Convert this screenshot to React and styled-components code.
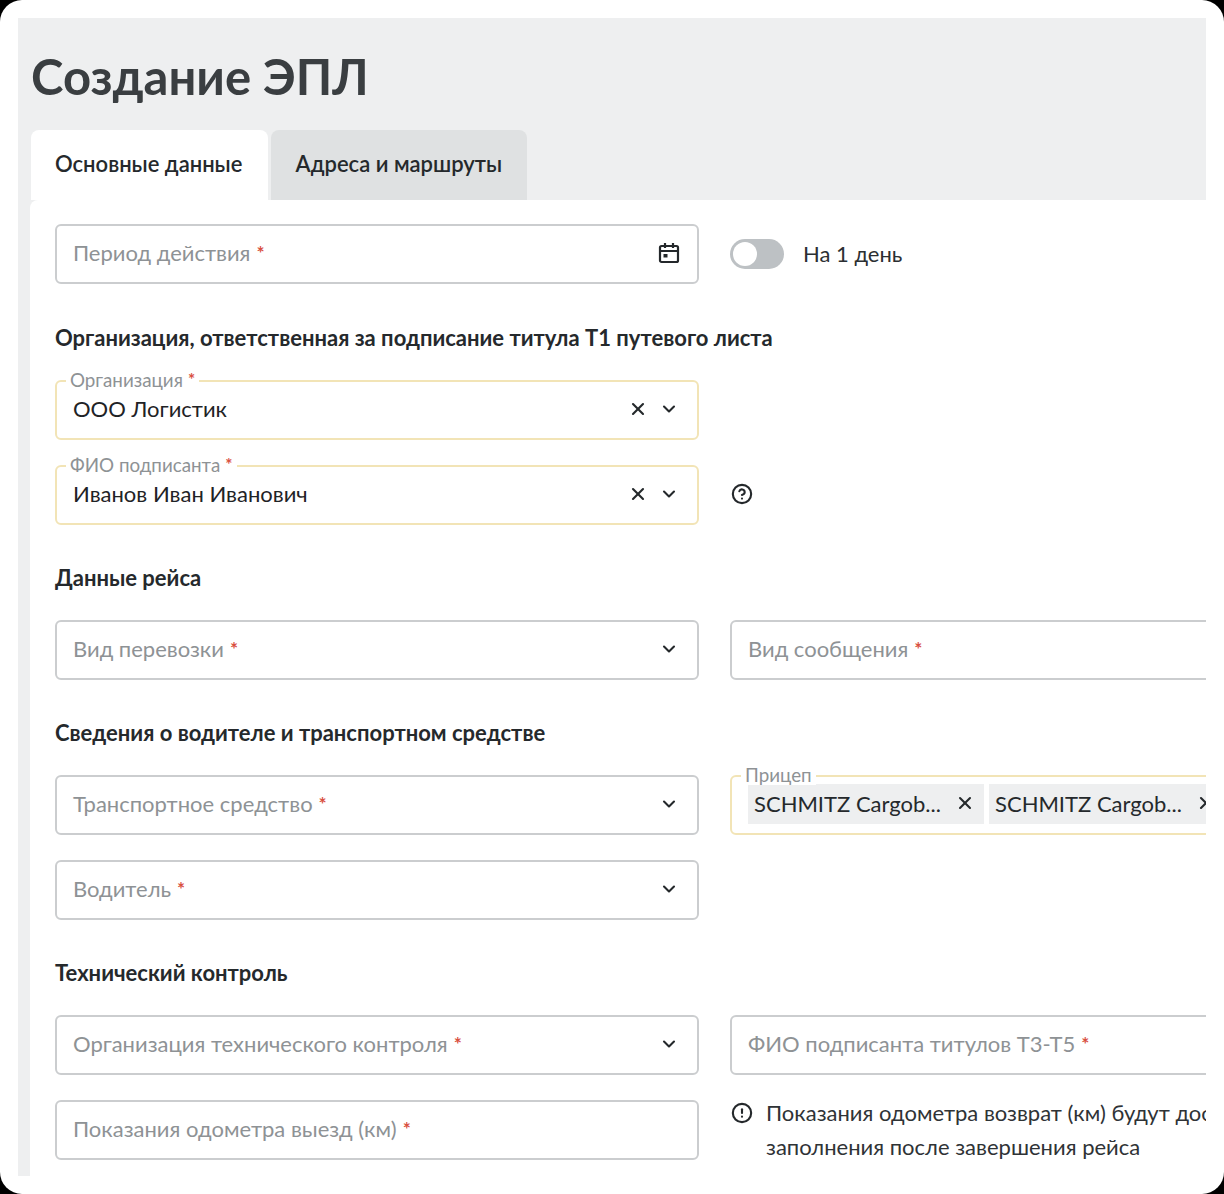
import React from 'react'
import styled, { createGlobalStyle } from 'styled-components'
import { X, ChevronDown, CircleHelp, CircleAlert } from 'lucide-react'

const GlobalStyle = createGlobalStyle`
  html, body {
    margin: 0;
    padding: 0;
    background: #000;
  }
  body {
    font-family: Lato, "Open Sans", "Noto Sans", sans-serif;
    color: #1f2326;
  }
`

const Frame = styled.div`
  width: 1224px;
  height: 1194px;
  box-sizing: border-box;
  padding: 18px;
  background: #fff;
  border-radius: 22px;
`

const Screen = styled.div`
  height: 1158px;
  padding-left: 12px;
  background: #eeeff0;
  overflow: hidden;
`

const Title = styled.h1`
  margin: 0;
  padding: 28px 0 0 1px;
  height: 84px;
  font-size: 49px;
  line-height: 60px;
  font-weight: 700;
  color: #3a3e41;
`

const Tabs = styled.div`
  display: flex;
  gap: 3px;
  padding-left: 1px;
`

const Tab = styled.div`
  box-sizing: border-box;
  height: 70px;
  padding: 0 ${(p) => (p.$active ? 26 : 25)}px 4px 24px;
  display: flex;
  align-items: center;
  border-radius: 8px 8px 0 0;
  font-size: 22px;
  font-weight: 600;
  color: #25292c;
  background: ${(p) => (p.$active ? '#fff' : '#dfe1e2')};
`

const Card = styled.div`
  height: 976px;
  padding: 24px 0 0 25px;
  background: #fff;
  border-radius: 8px 0 0 0;
`

const Section = styled.section`
  margin-top: ${(p) => p.$top ?? 41}px;
`

const SectionTitle = styled.h2`
  margin: 0 0 30px;
  font-size: 22px;
  line-height: 24px;
  font-weight: 700;
  color: #25292c;
`

const Grid = styled.div`
  display: grid;
  grid-template-columns: 644px 644px;
  column-gap: 31px;
  row-gap: 25px;
`

const Field = styled.div`
  position: relative;
  box-sizing: border-box;
  height: 60px;
  padding: 0 18px 3px 16px;
  display: flex;
  align-items: center;
  background: #fff;
  border: 2px solid ${(p) => (p.$filled ? '#f2e4b6' : '#cbcdcf')};
  border-radius: 6px;
  font-size: 22px;
`

const FieldText = styled.span`
  flex: 1;
  white-space: nowrap;
  color: #1f2326;
`

const Placeholder = styled.span`
  flex: 1;
  white-space: nowrap;
  color: #8e9295;
`

const Star = styled.span`
  position: relative;
  top: -1px;
  margin-left: 6px;
  font-size: 19px;
  font-weight: 700;
  color: #d9503f;
`

const FloatLabel = styled.label`
  position: absolute;
  top: -12px;
  left: 9px;
  padding: 0 4px;
  background: #fff;
  font-size: 18.8px;
  line-height: 20px;
  color: #8e9295;
`

const LabelStar = styled.span`
  position: relative;
  top: -1px;
  margin-left: 5px;
  font-size: 17px;
  font-weight: 700;
  color: #d9503f;
`

const Actions = styled.div`
  display: flex;
  align-items: center;
  gap: 11px;
  margin-top: 1px;
  color: #24282b;
`

const Aside = styled.div`
  display: flex;
  align-items: center;
  padding-bottom: 2px;
  font-size: 22px;
  color: #2b2f32;
`

const SwitchTrack = styled.div`
  box-sizing: border-box;
  width: 54px;
  height: 30px;
  margin: 2px 19px 0 0;
  padding: 3px;
  border-radius: 15px;
  background: #bdc1c4;
`

const SwitchKnob = styled.div`
  width: 24px;
  height: 24px;
  border-radius: 50%;
  background: #fff;
`

const HelpIcon = styled(CircleHelp)`
  margin-left: 1px;
  color: #24282b;
`

const Chips = styled.div`
  display: flex;
  gap: 5px;
  margin-top: 1px;
  overflow: hidden;
`

const Chip = styled.div`
  flex: none;
  box-sizing: border-box;
  width: 236px;
  height: 40px;
  padding: 0 9px 2px 6px;
  display: flex;
  align-items: center;
  justify-content: space-between;
  background: #eeeff0;
  color: #25292c;
`

const Note = styled.div`
  display: flex;
  gap: 13px;
  margin-top: -4px;
  font-size: 22px;
  line-height: 34px;
  color: #2f3336;
  white-space: nowrap;
`

const NoteIcon = styled(CircleAlert)`
  flex: none;
  margin: 6px 0 0 1px;
  color: #24282b;
`

const CalendarSvg = styled.svg`
  margin-right: -1px;
`

const CalendarIcon = () => (
  <CalendarSvg width="22" height="22" viewBox="0 0 22 22" fill="none" stroke="#24282b" strokeWidth="2.2">
    <rect x="2" y="4" width="18" height="16" rx="1.5" />
    <path d="M2 9h18M7 1v5M15 1v5" />
    <rect x="5.5" y="12" width="4" height="3.5" fill="#24282b" stroke="none" />
  </CalendarSvg>
)

const Chevron = () => <ChevronDown size={20} strokeWidth={2.5} />

const ClearIcon = () => <X size={20} strokeWidth={2.5} />

const Required = () => <Star>*</Star>

const PlainField = ({ label, select }) => (
  <Field>
    <Placeholder>
      {label}
      <Required />
    </Placeholder>
    {select && (
      <Actions>
        <Chevron />
      </Actions>
    )}
  </Field>
)

const FilledField = ({ label, value }) => (
  <Field $filled>
    <FloatLabel>
      {label}
      <LabelStar>*</LabelStar>
    </FloatLabel>
    <FieldText>{value}</FieldText>
    <Actions>
      <ClearIcon />
      <Chevron />
    </Actions>
  </Field>
)

const App = () => {
  return (
    <>
      <GlobalStyle />
      <Frame>
        <Screen>
          <Title>Создание ЭПЛ</Title>
          <Tabs>
            <Tab $active>Основные данные</Tab>
            <Tab>Адреса и маршруты</Tab>
          </Tabs>
          <Card>
            <Grid>
              <Field>
                <Placeholder>
                  Период действия
                  <Required />
                </Placeholder>
                <Actions>
                  <CalendarIcon />
                </Actions>
              </Field>
              <Aside>
                <SwitchTrack>
                  <SwitchKnob />
                </SwitchTrack>
                На 1 день
              </Aside>
            </Grid>

            <Section $top={42}>
              <SectionTitle>Организация, ответственная за подписание титула Т1 путевого листа</SectionTitle>
              <Grid>
                <FilledField label="Организация" value="ООО Логистик" />
                <div />
                <FilledField label="ФИО подписанта" value="Иванов Иван Иванович" />
                <Aside>
                  <HelpIcon size={22} strokeWidth={2.3} />
                </Aside>
              </Grid>
            </Section>

            <Section>
              <SectionTitle>Данные рейса</SectionTitle>
              <Grid>
                <PlainField label="Вид перевозки" select />
                <PlainField label="Вид сообщения" />
              </Grid>
            </Section>

            <Section>
              <SectionTitle>Сведения о водителе и транспортном средстве</SectionTitle>
              <Grid>
                <PlainField label="Транспортное средство" select />
                <Field $filled>
                  <FloatLabel>Прицеп</FloatLabel>
                  <Chips>
                    <Chip>
                      SCHMITZ Cargob...
                      <ClearIcon />
                    </Chip>
                    <Chip>
                      SCHMITZ Cargob...
                      <ClearIcon />
                    </Chip>
                  </Chips>
                </Field>
                <PlainField label="Водитель" select />
              </Grid>
            </Section>

            <Section>
              <SectionTitle>Технический контроль</SectionTitle>
              <Grid>
                <PlainField label="Организация технического контроля" select />
                <PlainField label="ФИО подписанта титулов Т3-Т5" />
                <PlainField label="Показания одометра выезд (км)" />
                <Note>
                  <NoteIcon size={22} strokeWidth={2.3} />
                  <div>
                    Показания одометра возврат (км) будут доступны для
                    <br />
                    заполнения после завершения рейса
                  </div>
                </Note>
              </Grid>
            </Section>
          </Card>
        </Screen>
      </Frame>
    </>
  )
}

export default App
